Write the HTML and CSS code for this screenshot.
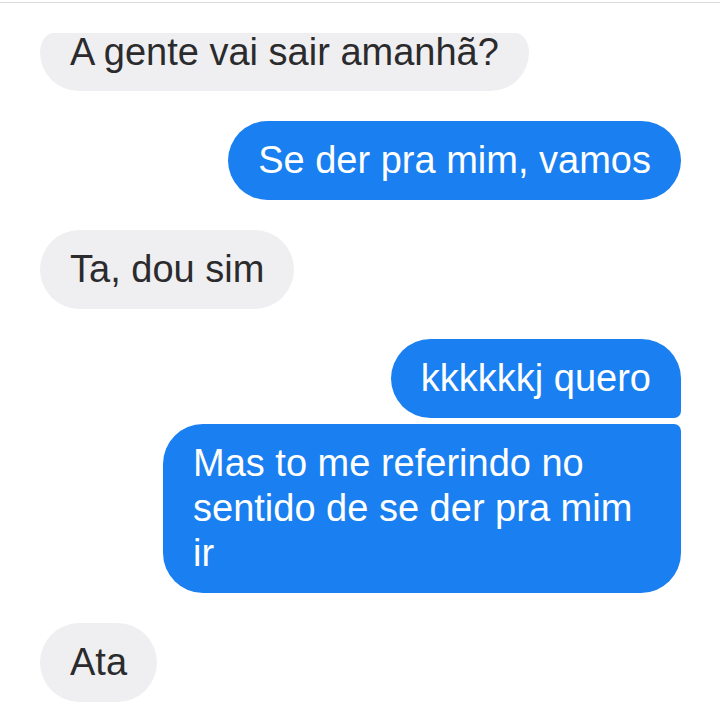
FILE: index.html
```html
<!DOCTYPE html>
<html lang="pt-BR">
<head>
    <meta charset="UTF-8">
    <meta name="viewport" content="width=device-width, initial-scale=1.0">
    <title>Conversa</title>
    <link rel="stylesheet" href="styles.css">
</head>
<body>
    <div class="topline"></div>
    <div class="chat">
        <div class="msg in cut">A gente vai sair amanhã?</div>
        <div class="msg out">Se der pra mim, vamos</div>
        <div class="msg in">Ta, dou sim</div>
        <div class="group">
            <div class="msg out first">kkkkkkj quero</div>
            <div class="msg out last">Mas to me referindo no sentido de se der pra mim ir</div>
        </div>
        <div class="msg in">Ata</div>
    </div>
</body>
</html>
```

FILE: styles.css
```css
body {
    margin: 0;
    background-color: #ffffff;
    font-family: 'Liberation Sans', Arial, Helvetica, sans-serif;
}
.topline {
    margin-top: 2px;
    height: 1px;
    background-color: #dcdcdc;
}
.chat {
    display: flex;
    flex-direction: column;
    gap: 30px;
    padding: 30px 39px 0 40px;
}
.msg {
    box-sizing: border-box;
    max-width: 518px;
    padding: 17px 30px;
    border-radius: 40px;
    font-size: 38px;
    line-height: 45px;
}
.in {
    align-self: flex-start;
    background-color: #efeff1;
    color: #2b2b2d;
}
.out {
    align-self: flex-end;
    background-color: #1a7ff0;
    color: #ffffff;
}
/* first bubble is cut by the top of the screenshot */
.cut {
    padding-top: 0;
    padding-bottom: 20px;
    line-height: 38px;
    border-top-left-radius: 14px 20px;
    border-top-right-radius: 14px 20px;
}
.group {
    display: flex;
    flex-direction: column;
    align-items: flex-end;
    gap: 6px;
}
.first { border-bottom-right-radius: 7px; }
.last { border-top-right-radius: 7px; }
```
